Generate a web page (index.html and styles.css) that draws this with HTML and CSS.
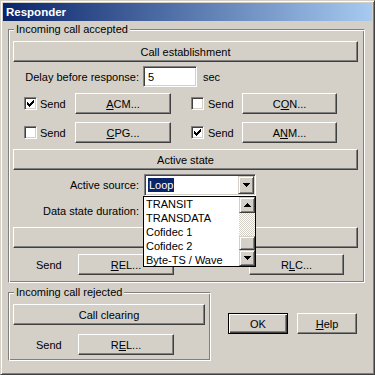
FILE: index.html
```html
<!DOCTYPE html>
<html>
<head>
<meta charset="utf-8">
<title>Responder</title>
<link rel="stylesheet" href="styles.css">
</head>
<body>
<div class="window">
  <div class="titlebar"><span class="title">Responder</span></div>
  <div class="client">
    <div class="group g-accepted">
      <span class="legend">Incoming call accepted</span>
      <div class="bar">Call establishment</div>

      <div class="field-row r-delay">
        <span class="flabel">Delay before response:</span>
        <div class="input delay-input">5</div>
        <span class="unit">sec</span>
      </div>

      <div class="check-row r-first">
        <span class="check"><svg class="tick" width="13" height="13" viewBox="0 0 13 13"><rect x="9" y="3" width="1" height="1"/><rect x="8" y="4" width="2" height="1"/><rect x="3" y="5" width="1" height="1"/><rect x="7" y="5" width="3" height="1"/><rect x="3" y="6" width="2" height="1"/><rect x="6" y="6" width="3" height="1"/><rect x="3" y="7" width="5" height="1"/><rect x="4" y="8" width="3" height="1"/><rect x="5" y="9" width="1" height="1"/></svg></span>
        <span class="clabel">Send</span>
        <div class="btn w-left"><u>A</u>CM...</div>
        <span class="check c-right"></span>
        <span class="clabel cl-right">Send</span>
        <div class="btn w-right">C<u>O</u>N...</div>
      </div>

      <div class="check-row r-second">
        <span class="check"></span>
        <span class="clabel">Send</span>
        <div class="btn w-left"><u>C</u>PG...</div>
        <span class="check c-right"><svg class="tick" width="13" height="13" viewBox="0 0 13 13"><rect x="9" y="3" width="1" height="1"/><rect x="8" y="4" width="2" height="1"/><rect x="3" y="5" width="1" height="1"/><rect x="7" y="5" width="3" height="1"/><rect x="3" y="6" width="2" height="1"/><rect x="6" y="6" width="3" height="1"/><rect x="3" y="7" width="5" height="1"/><rect x="4" y="8" width="3" height="1"/><rect x="5" y="9" width="1" height="1"/></svg></span>
        <span class="clabel cl-right">Send</span>
        <div class="btn w-right">A<u>N</u>M...</div>
      </div>

      <div class="bar bar-gap">Active state</div>

      <div class="field-row r-source">
        <span class="flabel">Active source:</span>
        <div class="combo">
          <div class="combo-value"><span class="sel">Loop</span></div>
          <div class="combo-btn"><svg class="arrow" width="7" height="4" viewBox="0 0 7 4"><rect x="0" y="0" width="7" height="1"/><rect x="1" y="1" width="5" height="1"/><rect x="2" y="2" width="3" height="1"/><rect x="3" y="3" width="1" height="1"/></svg></div>
          <div class="dropdown">
            <ul class="items">
              <li>TRANSIT</li>
              <li>TRANSDATA</li>
              <li>Cofidec 1</li>
              <li>Cofidec 2</li>
              <li>Byte-TS / Wave</li>
            </ul>
            <div class="scroll">
              <div class="sb-btn"><svg class="arrow" width="7" height="4" viewBox="0 0 7 4"><rect x="3" y="0" width="1" height="1"/><rect x="2" y="1" width="3" height="1"/><rect x="1" y="2" width="5" height="1"/><rect x="0" y="3" width="7" height="1"/></svg></div>
              <div class="sb-track"></div>
              <div class="sb-thumb"></div>
              <div class="sb-btn"><svg class="arrow" width="7" height="4" viewBox="0 0 7 4"><rect x="0" y="0" width="7" height="1"/><rect x="1" y="1" width="5" height="1"/><rect x="2" y="2" width="3" height="1"/><rect x="3" y="3" width="1" height="1"/></svg></div>
            </div>
          </div>
        </div>
      </div>

      <div class="field-row r-data">
        <span class="flabel">Data state duration:</span>
        <div class="input data-input"></div>
      </div>

      <div class="bar bar-gap"></div>

      <div class="send-row">
        <span class="slabel">Send</span>
        <div class="btn w-left"><u>R</u>EL...</div>
        <div class="btn w-right rlc">R<u>L</u>C...</div>
      </div>
    </div>

    <div class="bottom-row">
      <div class="group g-rejected">
        <span class="legend">Incoming call rejected</span>
        <div class="bar bar-small">Call clearing</div>
        <div class="send-row sr-rejected">
          <span class="slabel">Send</span>
          <div class="btn w-left">R<u>E</u>L...</div>
        </div>
      </div>
      <div class="dialog-buttons">
        <div class="btn dbtn default">OK</div>
        <div class="btn dbtn"><u>H</u>elp</div>
      </div>
    </div>
  </div>
</div>
</body>
</html>
```

FILE: styles.css
```css
* { box-sizing: border-box; }
html, body { margin: 0; padding: 0; }
body {
  width: 375px;
  height: 375px;
  overflow: hidden;
  background: #d4d0c8;
  font-family: "Liberation Sans", Arial, sans-serif;
  font-size: 11px;
  color: #000;
}
u { text-decoration: underline; text-underline-offset: 1px; }

.window {
  width: 375px;
  height: 375px;
  border: 1px solid;
  border-color: #d4d0c8 #404040 #404040 #d4d0c8;
  box-shadow: inset 1px 1px #fff, inset -1px -1px #808080;
  padding: 2px;
  display: flex;
  flex-direction: column;
  background: #d4d0c8;
}
.titlebar {
  flex: none;
  height: 18px;
  background: linear-gradient(to right, #0a246a, #a6caf0);
  color: #fff;
  font-weight: bold;
  font-size: 11.5px;
  display: flex;
  align-items: center;
  padding-left: 3px;
}
.client {
  flex: 1;
  padding: 8px 0 0 5px;
}

.group {
  position: relative;
  border: 1px solid;
  border-color: #808080 #fff #fff #808080;
  box-shadow: inset 1px 1px #fff, inset -1px -1px #808080;
  display: flex;
  flex-direction: column;
}
.legend {
  position: absolute;
  top: -7px;
  left: 5px;
  padding: 0 2px;
  line-height: 13px;
  background: #d4d0c8;
}
.g-accepted {
  width: 357px;
  height: 254px;
  padding: 11px 0 0 4px;
}

.btn, .bar {
  border: 1px solid;
  border-color: #fff #404040 #404040 #fff;
  box-shadow: inset -1px -1px #808080;
  background: #d4d0c8;
  display: flex;
  align-items: center;
  justify-content: center;
  height: 21px;
  flex: none;
}
.bar { width: 345px; }
.bar-gap { margin-top: 6px; }

.field-row {
  display: flex;
  align-items: center;
  flex: none;
}
.flabel {
  width: 130px;
  text-align: right;
  padding-right: 4px;
}
.r-delay { margin-top: 4px; height: 21px; }
.r-source { margin-top: 4px; height: 22px; }
.r-data { margin-top: 4px; height: 21px; }

.input {
  height: 21px;
  border: 1px solid;
  border-color: #808080 #fff #fff #808080;
  box-shadow: inset 1px 1px #404040, inset -1px -1px #d4d0c8;
  background: #fff;
  padding-left: 4px;
  display: flex;
  align-items: center;
}
.delay-input { width: 54px; }
.data-input { width: 54px; margin-left: 1px; }
.unit { margin-left: 6px; }

.check-row {
  display: flex;
  align-items: center;
  height: 21px;
  flex: none;
}
.r-first { margin-top: 6px; }
.r-second { margin-top: 8px; }
.check {
  width: 13px;
  height: 13px;
  margin-left: 11px;
  border: 1px solid;
  border-color: #808080 #fff #fff #808080;
  box-shadow: inset 1px 1px #404040, inset -1px -1px #d4d0c8;
  background: #fff;
  position: relative;
  flex: none;
}
.tick {
  position: absolute;
  left: -1px;
  top: -1px;
  fill: #000;
  shape-rendering: crispEdges;
}
.c-right { margin-left: 20px; }
.clabel { padding-left: 3px; }
.cl-right { padding-left: 4px; }
.check-row .clabel { box-sizing: content-box; width: 35px; }
.check-row .cl-right { width: 34px; }
.w-left { width: 96px; }
.w-right { width: 95px; }

.combo {
  position: relative;
  width: 112px;
  height: 22px;
  margin-left: 1px;
  border: 1px solid;
  border-color: #808080 #fff #fff #808080;
  box-shadow: inset 1px 1px #404040, inset -1px -1px #d4d0c8;
  background: #fff;
  padding: 2px;
  display: flex;
}
.combo-value {
  flex: 1;
  display: flex;
  align-items: center;
}
.sel {
  background: #0a246a;
  color: #fff;
  line-height: 14px;
  padding: 0 1px;
  margin-left: 1px;
}
.combo-btn, .sb-btn, .sb-thumb {
  border: 1px solid;
  border-color: #d4d0c8 #404040 #404040 #d4d0c8;
  box-shadow: inset 1px 1px #fff, inset -1px -1px #808080;
  background: #d4d0c8;
  display: flex;
  align-items: center;
  justify-content: center;
  flex: none;
}
.combo-btn { width: 16px; height: 18px; margin-top: -1px; margin-right: -1px; }
.arrow { fill: #000; shape-rendering: crispEdges; }

.dropdown {
  position: absolute;
  top: 21px;
  left: -2px;
  width: 113px;
  height: 71px;
  border: 1px solid #000;
  background: #fff;
  display: flex;
  z-index: 5;
}
.items {
  flex: 1;
  list-style: none;
  margin: 0;
  padding: 0;
  overflow: hidden;
}
.items li {
  height: 14px;
  line-height: 14px;
  padding-left: 2px;
  white-space: nowrap;
}
.scroll {
  width: 16px;
  display: flex;
  flex-direction: column;
}
.sb-btn { height: 16px; }
.sb-track {
  height: 23px;
  background: repeating-conic-gradient(#fff 0 25%, #d4d0c8 0 50%) 0 0 / 2px 2px;
}
.sb-thumb { height: 14px; }

.send-row {
  display: flex;
  align-items: center;
  height: 21px;
  margin-top: 6px;
  flex: none;
}
.slabel { width: 65px; padding-left: 23px; }
.rlc { margin-left: 75px; }

.bottom-row {
  display: flex;
  margin-top: 9px;
}
.g-rejected {
  width: 203px;
  height: 69px;
  padding: 11px 0 0 4px;
}
.bar-small { width: 192px; }
.sr-rejected { margin-top: 9px; }

.dialog-buttons {
  display: flex;
  gap: 9px;
  margin-left: 17px;
  margin-top: 21px;
  align-items: flex-start;
}
.dbtn { width: 60px; }
.default {
  border: 1px solid #000;
  box-shadow: inset 1px 1px #fff, inset -1px -1px #404040, inset -2px -2px #808080;
}
```
